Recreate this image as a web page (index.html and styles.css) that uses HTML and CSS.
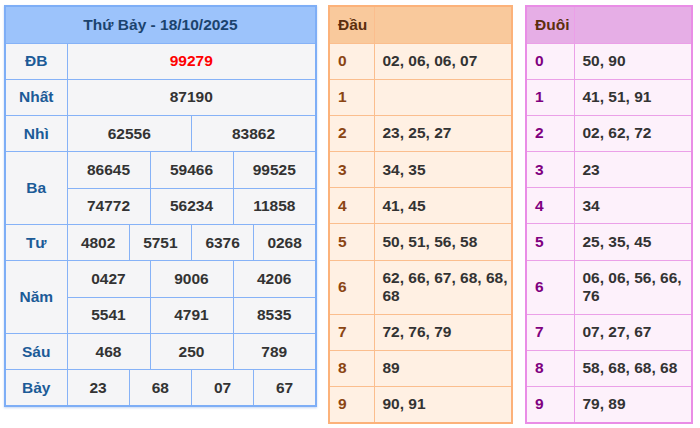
FILE: index.html
```html
<!DOCTYPE html>
<html lang="vi">
<head>
<meta charset="utf-8">
<title>Kết quả xổ số</title>
<link rel="stylesheet" href="styles.css">
</head>
<body>
<div class="page">
  <table class="kq">
    <colgroup>
      <col class="c-label">
      <col><col><col><col><col><col><col><col><col><col><col><col>
    </colgroup>
    <thead>
      <tr><th colspan="13" class="kq-head">Thứ Bảy - 18/10/2025</th></tr>
    </thead>
    <tbody>
      <tr><td class="lbl">ĐB</td><td colspan="12" class="db">99279</td></tr>
      <tr><td class="lbl">Nhất</td><td colspan="12">87190</td></tr>
      <tr><td class="lbl">Nhì</td><td colspan="6">62556</td><td colspan="6">83862</td></tr>
      <tr><td class="lbl" rowspan="2">Ba</td><td colspan="4">86645</td><td colspan="4">59466</td><td colspan="4">99525</td></tr>
      <tr><td colspan="4">74772</td><td colspan="4">56234</td><td colspan="4">11858</td></tr>
      <tr><td class="lbl">Tư</td><td colspan="3">4802</td><td colspan="3">5751</td><td colspan="3">6376</td><td colspan="3">0268</td></tr>
      <tr><td class="lbl" rowspan="2">Năm</td><td colspan="4">0427</td><td colspan="4">9006</td><td colspan="4">4206</td></tr>
      <tr><td colspan="4">5541</td><td colspan="4">4791</td><td colspan="4">8535</td></tr>
      <tr><td class="lbl">Sáu</td><td colspan="4">468</td><td colspan="4">250</td><td colspan="4">789</td></tr>
      <tr><td class="lbl">Bảy</td><td colspan="3">23</td><td colspan="3">68</td><td colspan="3">07</td><td colspan="3">67</td></tr>
    </tbody>
  </table>

  <table class="ld dau">
    <colgroup><col class="c-num"><col></colgroup>
    <thead><tr><th>Đầu</th><th></th></tr></thead>
    <tbody>
      <tr><td class="n">0</td><td>02, 06, 06, 07</td></tr>
      <tr><td class="n">1</td><td></td></tr>
      <tr><td class="n">2</td><td>23, 25, 27</td></tr>
      <tr><td class="n">3</td><td>34, 35</td></tr>
      <tr><td class="n">4</td><td>41, 45</td></tr>
      <tr><td class="n">5</td><td>50, 51, 56, 58</td></tr>
      <tr class="tall"><td class="n">6</td><td>62, 66, 67, 68, 68, 68</td></tr>
      <tr><td class="n">7</td><td>72, 76, 79</td></tr>
      <tr><td class="n">8</td><td>89</td></tr>
      <tr><td class="n">9</td><td>90, 91</td></tr>
    </tbody>
  </table>

  <table class="ld duoi">
    <colgroup><col class="c-num"><col></colgroup>
    <thead><tr><th>Đuôi</th><th></th></tr></thead>
    <tbody>
      <tr><td class="n">0</td><td>50, 90</td></tr>
      <tr><td class="n">1</td><td>41, 51, 91</td></tr>
      <tr><td class="n">2</td><td>02, 62, 72</td></tr>
      <tr><td class="n">3</td><td>23</td></tr>
      <tr><td class="n">4</td><td>34</td></tr>
      <tr><td class="n">5</td><td>25, 35, 45</td></tr>
      <tr class="tall"><td class="n">6</td><td>06, 06, 56, 66, 76</td></tr>
      <tr><td class="n">7</td><td>07, 27, 67</td></tr>
      <tr><td class="n">8</td><td>58, 68, 68, 68</td></tr>
      <tr><td class="n">9</td><td>79, 89</td></tr>
    </tbody>
  </table>
</div>
</body>
</html>
```

FILE: styles.css
```css
* { box-sizing: border-box; }

html, body {
  margin: 0;
  padding: 0;
  background: #ffffff;
}

body {
  font-family: "Liberation Sans", Arial, sans-serif;
  font-size: 15.5px;
  font-weight: bold;
  color: #333333;
}

.page {
  display: flex;
  align-items: flex-start;
  padding: 5px 4px;
}

table {
  border-collapse: collapse;
  table-layout: fixed;
}

/* ---- results table ---- */
.kq {
  width: 313px;
  border: 2px solid #7eaef6;
  background: #f5f5f7;
  box-shadow: 0 1px 2px rgba(90, 140, 220, 0.35);
}

.kq .c-label { width: 62px; }

.kq td,
.kq th {
  border: 1px solid #86b2f7;
  text-align: center;
  padding: 0;
}

.kq td { height: 36.3px; }

.kq-head {
  height: 37px;
  background: #9cc3fb;
  color: #1b436e;
  font-weight: bold;
}

.kq .lbl { color: #1c5b97; }
.kq .db { color: #ff0000; }

/* ---- dau / duoi tables ---- */
.ld { margin-left: 11px; }

.ld th,
.ld td {
  text-align: left;
  padding: 0 0 0 8px;
  line-height: 18px;
}

.ld th { height: 37px; font-weight: bold; }
.ld td { height: 36.2px; }
.ld tr.tall td { height: 54px; }

.dau {
  width: 185px;
  border: 2px solid #fcb27a;
  background: #fff0e3;
}
.dau .c-num { width: 45px; }
.dau th, .dau td { border: 1px solid #fbbe8e; }
.dau th { background: #f9c99c; color: #5c2e0e; }
.dau .n { color: #8b4513; }

.duoi {
  margin-left: 12px;
  width: 168px;
  border: 2px solid #e98de6;
  background: #fdf1fb;
}
.duoi .c-num { width: 48px; }
.duoi th, .duoi td { border: 1px solid #eba0e8; }
.duoi th { background: #e6aee6; color: #5c2e0e; }
.duoi .n { color: #800080; }
```
